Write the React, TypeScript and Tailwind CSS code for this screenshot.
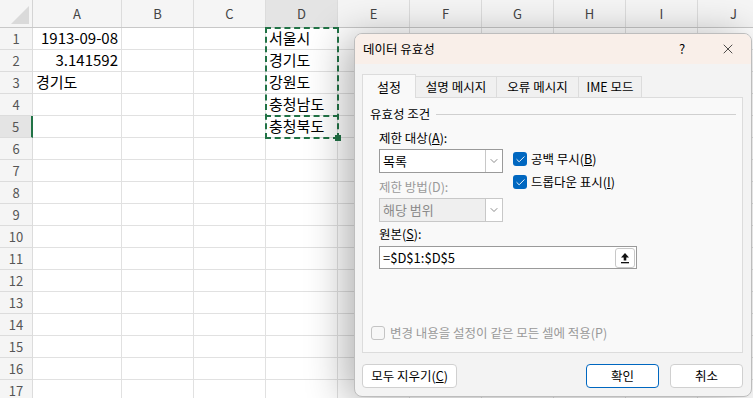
import { ChevronDown, X, Check } from "lucide-react";

const columns = [
  { name: "A", cls: "w-[89px]" },
  { name: "B", cls: "w-[72px]" },
  { name: "C", cls: "w-[72px]" },
  { name: "D", cls: "w-[72px]" },
  { name: "E", cls: "w-[72px]" },
  { name: "F", cls: "w-[72px]" },
  { name: "G", cls: "w-[72px]" },
  { name: "H", cls: "w-[72px]" },
  { name: "I", cls: "w-[72px]" },
  { name: "J", cls: "w-[72px]" },
];

type Cell = { text: string; right?: boolean };

const data: Record<number, Record<string, Cell>> = {
  1: { A: { text: "1913-09-08", right: true }, D: { text: "서울시" } },
  2: { A: { text: "3.141592", right: true }, D: { text: "경기도" } },
  3: { A: { text: "경기도" }, D: { text: "강원도" } },
  4: { D: { text: "충청남도" } },
  5: { D: { text: "충청북도" } },
};

const rows = Array.from({ length: 17 }, (_, i) => i + 1);

function Sheet() {
  return (
    <div className="flex flex-col">
      <div className="flex h-[28px] shrink-0 border-b border-[#c8c8c8] bg-[#f5f5f5]">
        <div className="relative w-[33px] shrink-0 border-r border-[#d4d4d4]">
          <div className="absolute bottom-[3px] right-[3px] h-0 w-0 border-b-[18px] border-l-[18px] border-b-[#dadada] border-l-transparent" />
        </div>
        {columns.map((c) => (
          <div
            key={c.name}
            className={`${c.cls} flex shrink-0 items-center justify-center border-r border-[#dcdcdc] text-[13px] text-[#444] ${c.name === "D" ? "bg-[#e4e4e4]" : ""}`}
          >
            {c.name}
          </div>
        ))}
      </div>
      {rows.map((r) => (
        <div key={r} className="flex h-[22px] shrink-0">
          <div
            className={`flex w-[33px] shrink-0 items-center justify-center border-b border-r border-[#dcdcdc] text-[13px] text-[#555] ${r === 5 ? "border-r-2 border-r-[#217346] bg-[#e4e4e4]" : "bg-[#f5f5f5]"}`}
          >
            {r}
          </div>
          {columns.map((c) => {
            const cell = data[r]?.[c.name];
            return (
              <div
                key={c.name}
                className={`${c.cls} flex shrink-0 items-center overflow-hidden whitespace-nowrap border-b border-r border-[#e1e1e1] px-[3px] text-[15px] text-black ${cell?.right ? "justify-end" : "justify-start"}`}
              >
                {cell?.text}
              </div>
            );
          })}
        </div>
      ))}
    </div>
  );
}

function CheckBox({ checked, disabled }: { checked?: boolean; disabled?: boolean }) {
  if (checked) {
    return (
      <span className="flex h-[14px] w-[14px] shrink-0 items-center justify-center rounded-[3px] bg-[#0067c0]">
        <Check size={11} color="#fff" strokeWidth={2} />
      </span>
    );
  }
  return (
    <span
      className={`h-[14px] w-[14px] shrink-0 rounded-[3px] border ${disabled ? "border-[#c4c4c4]" : "border-[#8a8a8a]"} bg-[#f7f7f7]`}
    />
  );
}

function Select({ value, disabled }: { value: string; disabled?: boolean }) {
  return (
    <div
      className={`flex h-[24px] w-[124px] border text-[13px] ${disabled ? "border-[#c8c8c8] bg-[#efefef] text-[#8a8a8a]" : "border-[#9a9a9a] bg-white text-black"}`}
    >
      <div className="flex flex-1 items-center pl-[3px]">{value}</div>
      <div className="flex w-[17px] items-center justify-center border-l border-[#c8c8c8] bg-white">
        <ChevronDown size={12} color="#666" strokeWidth={1.5} />
      </div>
    </div>
  );
}

function Dialog() {
  return (
    <div className="absolute left-[354px] top-[33px] flex h-[364px] w-[398px] flex-col overflow-hidden rounded-[8px] border border-[#bdbdbd] bg-[#f3f3f3] text-[12.5px] text-black shadow-[-8px_4px_40px_rgba(0,0,0,0.32)]">
      <div className="flex h-[30px] shrink-0 items-center bg-[#f9efe9] pl-[8px]">
        <span className="flex-1">데이터 유효성</span>
        <span className="w-[46px] text-center text-[13px]">?</span>
        <span className="flex w-[46px] items-center justify-center">
          <X size={16} strokeWidth={1.2} color="#222" />
        </span>
      </div>
      <div className="flex flex-1 flex-col pl-[7px] pr-[8px] pt-[9px]">
        <div className="flex h-[24px] items-end">
          <div className="z-10 -mb-px flex h-[24px] w-[54px] items-center justify-center border border-b-0 border-[#dcdcdc] bg-[#f9f9f9] text-[13px]">
            설정
          </div>
          <div className="flex h-[21px] w-[81px] items-center justify-center border-r border-t border-[#dcdcdc] bg-[#f0f0f0]">
            설명 메시지
          </div>
          <div className="flex h-[21px] w-[82px] items-center justify-center border-r border-t border-[#dcdcdc] bg-[#f0f0f0]">
            오류 메시지
          </div>
          <div className="flex h-[21px] w-[63px] items-center justify-center border-r border-t border-[#dcdcdc] bg-[#f0f0f0]">
            IME 모드
          </div>
        </div>
        <div className="flex h-[256px] flex-col border border-[#dcdcdc] bg-[#f9f9f9] pb-[11px] pl-[7px] pt-[8px]">
          <div className="flex h-[16px] items-center gap-[6px] pr-[6px]">
            <span>유효성 조건</span>
            <span className="h-px flex-1 bg-[#d0d0d0]" />
          </div>
          <div className="flex flex-col pl-[9px]">
            <div className="mt-[8px] flex h-[16px] items-center">
              제한 대상(<span className="underline">A</span>):
            </div>
            <div className="mt-[3px] flex">
              <div className="flex flex-col">
                <Select value="목록" />
                <div className="mt-[6px] flex h-[16px] items-center text-[#9a9a9a]">제한 방법(D):</div>
                <div className="mt-[3px]">
                  <Select value="해당 범위" disabled />
                </div>
              </div>
              <div className="ml-[10px] flex flex-col gap-[9px] pt-[3px]">
                <div className="flex h-[14px] items-center gap-[4px]">
                  <CheckBox checked />
                  <span>
                    공백 무시(<span className="underline">B</span>)
                  </span>
                </div>
                <div className="flex h-[14px] items-center gap-[4px]">
                  <CheckBox checked />
                  <span>
                    드롭다운 표시(<span className="underline">I</span>)
                  </span>
                </div>
              </div>
            </div>
            <div className="mt-[4px] flex h-[16px] items-center">
              원본(<span className="underline">S</span>):
            </div>
            <div className="mt-[4px] flex h-[23px] w-[258px] items-center border border-[#9a9a9a] bg-white pl-[3px] pr-[1px]">
              <span className="flex-1 text-[13px]">=$D$1:$D$5</span>
              <span className="flex h-[20px] w-[20px] items-center justify-center rounded-[3px] border border-[#c8c8c8] bg-white">
                <svg width="12" height="12" viewBox="0 0 12 12">
                  <path d="M6 1 L10 5.5 H7.3 V8.5 H4.7 V5.5 H2 Z" fill="#111" />
                  <rect x="2" y="10" width="8" height="1.3" fill="#111" />
                </svg>
              </span>
            </div>
          </div>
          <div className="mt-auto flex h-[16px] items-center gap-[5px] pl-[1px] text-[#9a9a9a]">
            <CheckBox disabled />
            <span>변경 내용을 설정이 같은 모든 셀에 적용(P)</span>
          </div>
        </div>
        <div className="mt-[11px] flex h-[24px]">
          <div className="flex w-[95px] items-center justify-center rounded-[4px] border border-[#d0d0d0] bg-white">
            모두 지우기(<span className="underline">C</span>)
          </div>
          <div className="flex-1" />
          <div className="flex w-[73px] items-center justify-center rounded-[4px] border border-[#0067c0] bg-white">
            확인
          </div>
          <div className="ml-[11px] flex w-[73px] items-center justify-center rounded-[4px] border border-[#d0d0d0] bg-white">
            취소
          </div>
        </div>
      </div>
    </div>
  );
}

export default function App() {
  return (
    <div className="relative h-[398px] w-[753px] overflow-hidden bg-white font-['Noto_Sans_CJK_KR',sans-serif]">
      <Sheet />
      <div className="absolute left-[265px] top-[27px] h-[112px] w-[74px] border-2 border-dashed border-[#217346]" />
      <div className="absolute left-[265px] top-[115px] h-[2px] w-[74px] border-t-2 border-dashed border-[#217346]" />
      <div className="absolute left-[335px] top-[135px] h-[6px] w-[6px] bg-[#217346]" />
      <Dialog />
    </div>
  );
}
